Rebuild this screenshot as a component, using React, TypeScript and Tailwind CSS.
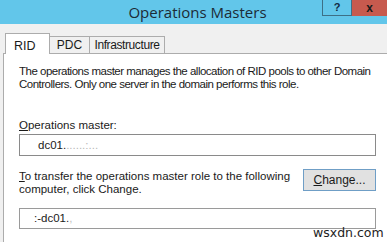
import React from "react";

export default function App() {
  const font = { fontFamily: '"Liberation Sans", Arial, sans-serif' };
  return (
    <div className="relative w-[387px] h-[242px] overflow-hidden bg-[#f0f0f0] text-[#1a1a1a]" style={font}>
      {/* Title bar */}
      <div className="relative h-[24px] bg-[#62c6ea] flex items-center justify-center">
        <span className="text-[15px] text-[#1c2b36] ml-[8px] mt-[1px]" style={{ fontFamily: '"Open Sans", "Noto Sans", sans-serif' }}>
          Operations Masters
        </span>
        <div className="absolute right-0 top-0 flex h-[16px]">
          <div className="w-[30px] h-[16px] bg-[#62c6ea] border-l border-r border-b border-[#3d6f86] flex items-center justify-center text-[11px] font-bold text-[#102a44]">
            ?
          </div>
          <div className="w-[35px] h-[16px] bg-[#c75a4e] flex items-center justify-center text-[12px] font-bold text-[#1a1a1a]">
            x
          </div>
        </div>
      </div>

      {/* Tabs */}
      <div className="pl-[5px] pt-[8px] flex items-end h-[29px]">
        <div className="relative z-10 w-[45px] h-[21px] bg-white border border-b-0 border-[#acacac] flex items-start pt-[3px] pl-[8px] text-[12.5px] mb-[-1px]">
          RID
        </div>
        <div className="w-[40px] h-[17px] bg-[#f0f0f0] border border-b-0 border-l-0 border-[#acacac] flex items-center justify-center text-[12px]">
          PDC
        </div>
        <div className="w-[75px] h-[17px] bg-[#f0f0f0] border border-b-0 border-l-0 border-[#acacac] flex items-center justify-center text-[12px] tracking-[-0.4px]">
          Infrastructure
        </div>
      </div>

      {/* Panel */}
      <div className="ml-[3px] bg-white border-l border-t border-[#acacac] h-[200px] pl-[15px] pt-[11px] text-[11.5px] leading-[13px]">
        <p className="w-[366px] tracking-[-0.5px]">
          The operations master manages the allocation of RID pools to other Domain Controllers. Only one server in the domain performs this role.
        </p>
        <div className="mt-[28px] first-letter:underline">Operations master:</div>
        <div className="mt-[2px] w-[357px] h-[22px] border border-[#8a8a8a] flex items-center pl-[18px]">
          dc01.<span className="text-[#b8b8b8]">......:...</span>
        </div>
        <div className="mt-[14px] flex items-start w-[357px]">
          <div className="flex-1 first-letter:underline">
            To transfer the operations master role to the following computer, click Change.
          </div>
          <div className="mt-[-1px] w-[73px] h-[22px] bg-[#e1e1e1] border border-[#6f9ec6] flex items-center justify-center text-[12px]">
            <span className="first-letter:underline">Change...</span>
          </div>
        </div>
        <div className="mt-[12px] w-[357px] h-[21px] border border-[#9a9a9a] flex items-center pl-[14px]">
          :-dc01.<span className="text-[#c0c0c0]">,</span>
        </div>
      </div>

      <div className="absolute left-[313px] top-[224px] text-[12.5px] text-[#222]" style={{ fontFamily: '"DejaVu Sans", sans-serif' }}>
        wsxdn.com
      </div>
    </div>
  );
}
